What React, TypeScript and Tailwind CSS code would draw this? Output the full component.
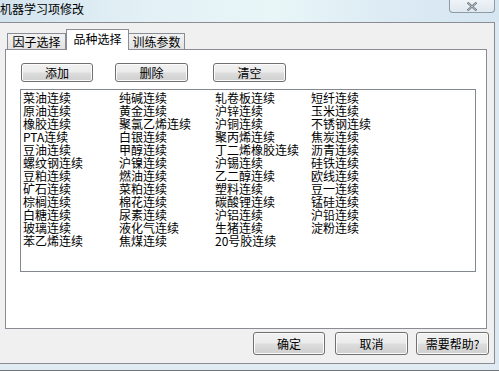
const col1 = ["菜油连续", "原油连续", "橡胶连续", "PTA连续", "豆油连续", "螺纹钢连续", "豆粕连续", "矿石连续", "棕榈连续", "白糖连续", "玻璃连续", "苯乙烯连续"];
const col2 = ["纯碱连续", "黄金连续", "聚氯乙烯连续", "白银连续", "甲醇连续", "沪镍连续", "燃油连续", "菜粕连续", "棉花连续", "尿素连续", "液化气连续", "焦煤连续"];
const col3 = ["轧卷板连续", "沪锌连续", "沪铜连续", "聚丙烯连续", "丁二烯橡胶连续", "沪锡连续", "乙二醇连续", "塑料连续", "碳酸锂连续", "沪铝连续", "生猪连续", "20号胶连续"];
const col4 = ["短纤连续", "玉米连续", "不锈钢连续", "焦炭连续", "沥青连续", "硅铁连续", "欧线连续", "豆一连续", "锰硅连续", "沪铅连续", "淀粉连续"];

const Btn = ({ label, className }: { label: string; className: string }) => (
  <button className={`flex items-center justify-center rounded-[3px] border border-[#707070] bg-[linear-gradient(#f2f2f2_0%,#ebebeb_48%,#dddddd_52%,#cfcfcf_100%)] shadow-[inset_0_0_0_1px_#fbfbfb] text-[12px] leading-none text-black ${className}`}>
    {label}
  </button>
);

const App = () => {
  const cols = [col1, col2, col3, col4];

  return (
    <div className="w-[499px] h-[371px] flex flex-col overflow-hidden bg-[#dce9f3] font-['Noto_Sans_CJK_SC',sans-serif] text-black">
      {/* title bar */}
      <div className="h-[22px] flex justify-between items-start bg-[linear-gradient(90deg,#d3e3ee_0%,#e3f1f6_30%,#e8f6f8_55%,#dbeaf3_80%,#d6e6f1_100%)]">
        <span className="text-[12px] leading-[15px] mt-[1px] text-black">机器学习项修改</span>
        <div className="w-[46px] h-[13px] mr-[4px] flex items-center justify-center rounded-b-[4px] border border-t-0 border-[#8e9aa6] bg-[linear-gradient(#eef3f7,#dfe8ef)]">
          <svg width="12" height="9" viewBox="0 0 12 9">
            <path d="M1.5 0.5 L10.5 8.5 M10.5 0.5 L1.5 8.5" stroke="#5d6570" strokeWidth="2" fill="none" />
            <path d="M1.5 0.5 L10.5 8.5 M10.5 0.5 L1.5 8.5" stroke="#f4f6f8" strokeWidth="0.7" fill="none" />
          </svg>
        </div>
      </div>

      {/* client area */}
      <div className="w-[495px] h-[342px] flex flex-col border-t border-r border-b border-[#8a8d92] bg-[#f0f0f0] pl-[5px] pt-[6px]">
        {/* tabs */}
        <div className="h-[20px] flex items-end pl-[2px] text-[12px] leading-none">
          <div className="w-[59px] h-[16px] flex items-center justify-center border border-b-0 border-[#898c95] bg-[linear-gradient(#f2f2f2,#e3e3e3)]">因子选择</div>
          <div className="relative z-10 -mb-px w-[63px] h-[21px] flex items-center justify-center border border-b-0 border-[#898c95] bg-white pb-[2px]">品种选择</div>
          <div className="w-[56px] h-[16px] flex items-center justify-center border border-l-0 border-b-0 border-[#898c95] bg-[linear-gradient(#f2f2f2,#e3e3e3)]">训练参数</div>
        </div>

        {/* panel */}
        <div className="w-[482px] h-[280px] border border-[#898c95] bg-white pl-[15px] pt-[13px]">
          <div className="flex">
            <Btn label="添加" className="w-[72px] h-[19px]" />
            <Btn label="删除" className="w-[73px] h-[19px] ml-[22px]" />
            <Btn label="清空" className="w-[73px] h-[19px] ml-[25px]" />
          </div>
          <div className="-ml-px mt-[7px] w-[456px] h-[183px] border border-[#828790] bg-white pl-[2px] pt-[1px] flex text-[12px] leading-[13px]">
            {cols.map((c, i) => (
              <div key={i} className="w-[96px] flex flex-col">
                {c.map((t) => (
                  <span key={t} className="h-[13px] whitespace-nowrap">{t}</span>
                ))}
              </div>
            ))}
          </div>
        </div>

        {/* dialog buttons */}
        <div className="mt-[3px] flex pl-[248px]">
          <Btn label="确定" className="w-[72px] h-[23px]" />
          <Btn label="取消" className="w-[73px] h-[23px] ml-[10px]" />
          <Btn label="需要帮助?" className="w-[73px] h-[23px] ml-[8px]" />
        </div>
      </div>

      {/* frame bottom */}
      <div className="h-[7px] border-b border-[#6f7479] bg-[#dfeaf3]" />
    </div>
  );
};

export default App;
